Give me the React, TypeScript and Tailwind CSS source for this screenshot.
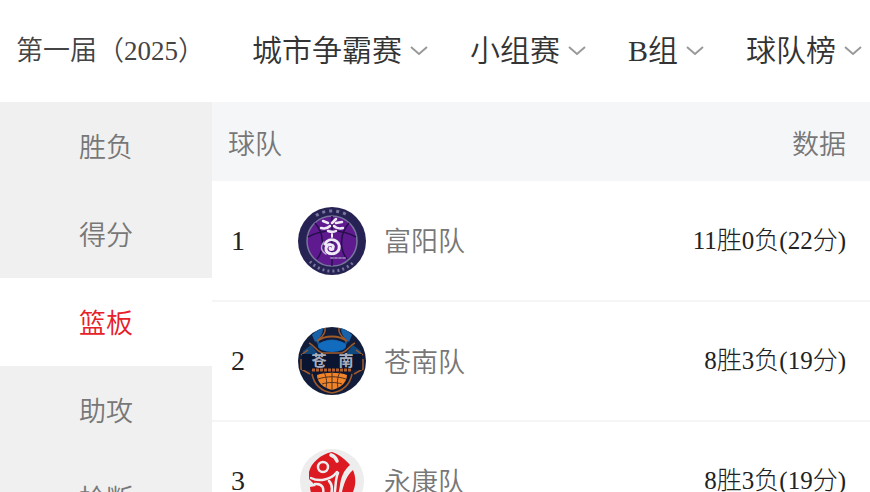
import { useState } from 'react';
import { clsx } from 'clsx';

const filters = [
	{ id: 'event', label: '赛事', options: ['城市争霸赛'] },
	{ id: 'stage', label: '阶段', options: ['小组赛'] },
	{ id: 'group', label: '组别', options: ['B组'] },
	{ id: 'board', label: '榜单', options: ['球队榜'] },
];

const categories = ['胜负', '得分', '篮板', '助攻', '抢断'];

const teams = [
	{ rank: 1, name: '富阳队', record: '11胜0负(22分)', Logo: FuyangLogo },
	{ rank: 2, name: '苍南队', record: '8胜3负(19分)', Logo: CangnanLogo },
	{ rank: 3, name: '永康队', record: '8胜3负(19分)', Logo: YongkangLogo },
];

function FuyangLogo() {
	return (
		<svg viewBox="0 0 68 68" className="w-[68px] h-[68px]" aria-hidden="true">
			<circle cx="34" cy="34" r="34" fill="#262253" />
			<circle cx="34" cy="34" r="25" fill="#5f1a90" stroke="#77769c" strokeWidth="1.5" />
			<g fill="none" stroke="#25104a" strokeWidth="1.5">
				<path d="M34 9v50" />
				<path d="M10 30c14-8 34-8 48 0" />
				<path d="M17 16c9 10 10 26 2 36" />
				<path d="M51 16c-9 10-10 26-2 36" />
			</g>
			<g fill="none" stroke="#77769c" strokeWidth="3">
				<path d="M18 8.500a30 30 0 0 1 32 0" strokeDasharray="3 4" />
				<path d="M12 54.500a30 30 0 0 0 44 0" strokeDasharray="2 3" />
			</g>
			<g fill="none" stroke="#efeaf6" strokeLinecap="round">
				<path d="M25 14l5 2M38 12l-4 4M44 15l-6 1M23 21c4 1 7 0 9-2M36 19c2 2 6 3 9 2" strokeWidth="2.500" />
				<path d="M30 24c3 1 6 1 8 0" strokeWidth="2.500" />
				<path d="M34 27v3" strokeWidth="2" />
				<path d="M27 37c4-8 16-4 14 5c-2 7-14 6-13-1c1-5 9-4 7 0c0 2-3 2-3 0" strokeWidth="3" />
				<path d="M26 35c-4 5-3 9 2 12" stroke="#b79fcd" strokeWidth="1.500" />
				<path d="M33 51h16" stroke="#8f70b0" strokeWidth="2" strokeDasharray="2 2" />
			</g>
		</svg>
	);
}

function CangnanLogo() {
	return (
		<svg viewBox="0 0 68 68" className="w-[68px] h-[68px]" aria-hidden="true">
			<circle cx="34" cy="34" r="34" fill="#111d3b" />
			<path d="M14 7l7 13l13 5l13-5l7-13c-4 2-7 6-8 10c-7-6-17-6-24 0c-1-4-4-8-8-10z" fill="#155591" />
			<path d="M14 8c4-4 7-6 11-7c0 6-3 10-8 14zM54 8c-4-4-7-6-11-7c0 6 3 10 8 14z" fill="#1762a8" />
			<ellipse cx="34" cy="19" rx="14" ry="6" fill="#126bbd" />
			<path d="M5 24l8-6l8 10l-15 6zM63 24l-8-6l-8 10l15 6z" fill="#10497f" />
			<g fill="none" stroke="#a05a28" strokeWidth="1.500">
				<path d="M27 1c1 5-2 8-6 11M41 1c-1 5 2 8 6 11" />
				<path d="M19 14c8-6 22-6 30 0" strokeWidth="2" />
				<path d="M11 16c5 2 7 8 13 10h20c6-2 8-8 13-10M3 28l7-5M65 28l-7-5" />
				<path d="M3 32v10l9 5M65 32v10l-9 5" />
			</g>
			<path d="M4 27h60v16H4z" fill="#0a1531" />
			<text x="21" y="39" textAnchor="middle" fill="#a9afbd" fontSize="15" fontWeight="700" fontFamily="Noto Sans CJK SC, sans-serif">苍</text>
			<text x="48" y="39" textAnchor="middle" fill="#a9afbd" fontSize="15" fontWeight="700" fontFamily="Noto Sans CJK SC, sans-serif">南</text>
			<path d="M15 42h38c1 12-6 22-19 25c-13-3-20-13-19-25z" fill="#0b1733" />
			<path d="M14 43h40" stroke="#b0602a" strokeWidth="3" strokeDasharray="3 1" />
			<path d="M19 48c7-3 23-3 30 0c0 7-6 13-15 15c-9-2-15-8-15-15z" fill="#f08428" />
			<g fill="none" stroke="#54301f" strokeWidth="1">
				<path d="M34 45v18M20 52c9-3 19-3 28 0M24 57c6-2 14-2 20 0" />
				<path d="M26 45c3 6 3 11 2 16M42 45c-3 6-3 11-2 16" />
			</g>
			<path d="M14 47c2 10 9 17 20 19c11-2 18-9 20-19" fill="none" stroke="#a05a28" strokeWidth="1.500" />
		</svg>
	);
}

function YongkangLogo() {
	return (
		<svg viewBox="0 0 68 68" className="w-[68px] h-[68px]" aria-hidden="true">
			<circle cx="34" cy="34" r="32" fill="#ededed" />
			<path d="M11 25c2-9 12-18 23-20c7 2 14 8 18 13c-7 6-9 13-10 20c-1 10-6 20-12 24c-10-4-18-14-18-22l6-1l-7-7z" fill="#dc1a22" />
			<path d="M55 23c4 9 3 20-4 28c-4 4-8 5-11 5c6-12 4-23 15-33z" fill="#dc1a22" />
			<g fill="none" stroke="#ededed" strokeLinecap="round">
				<circle cx="25" cy="20" r="5" strokeWidth="2.500" />
				<path d="M33 8c3 1 5 3 6 6" strokeWidth="3.500" />
				<path d="M13 31c8 4 20 2 26-6" strokeWidth="2.500" />
				<path d="M17 37c8-1 10 5 7 13M31 34c5 5 3 14-2 21M40 26c-4 9-1 19-6 29" strokeWidth="2.500" />
			</g>
		</svg>
	);
}

function FilterSelect({ id, label, options }: { id: string; label: string; options: string[] }) {
	return (
		<div className="flex items-center gap-2 shrink-0">
			<select
				id={id}
				aria-label={label}
				className="appearance-none field-sizing-content leading-[48px] bg-transparent text-[30px] font-[350] text-[#333] outline-none cursor-pointer"
			>
				{options.map((option) => (
					<option key={option}>{option}</option>
				))}
			</select>
			<svg viewBox="0 0 18 10" className="w-[18px] h-[10px] pointer-events-none" aria-hidden="true">
				<path d="M1 1l8 7l8-7" fill="none" stroke="#999" strokeWidth="2" />
			</svg>
		</div>
	);
}

export default function App() {
	const [active, setActive] = useState('篮板');

	return (
		<div className="flex flex-col h-screen overflow-hidden bg-white font-['Liberation_Serif','Noto_Sans_CJK_SC',serif]">
			<header className="flex items-center justify-between shrink-0 h-[102px] pl-4 pr-2">
				<h1 className="text-[27px] font-[350] text-[#444] whitespace-nowrap">第一届（2025）</h1>
				<div className="flex items-center gap-[42px]">
					{filters.map((filter) => (
						<FilterSelect key={filter.id} {...filter} />
					))}
				</div>
			</header>

			<div className="flex flex-1 min-h-0">
				<nav className="w-[212px] shrink-0 overflow-hidden bg-[#f0f0f0]">
					{categories.map((category) => (
						<button
							key={category}
							type="button"
							onClick={() => setActive(category)}
							className={clsx(
								'block w-full h-[88px] pt-1 text-[27px] font-[350]',
								category === active ? 'bg-white text-[#e62129]' : 'text-[#777]'
							)}
						>
							{category}
						</button>
					))}
				</nav>

				<main className="flex-1 overflow-hidden">
					<table className="w-full border-collapse">
						<thead>
							<tr className="h-[79px] bg-[#f5f6f8] text-[27px] text-[#777]">
								<th colSpan={2} className="pl-4 pt-2 text-left font-[350]">球队</th>
								<th className="pr-6 pt-2 text-right font-[350]">数据</th>
							</tr>
						</thead>
						<tbody>
							{teams.map(({ rank, name, record, Logo }) => (
								<tr key={rank} className="h-[120px] border-b-2 border-[#f5f5f5]">
									<td className="w-[86px] pl-[19px] text-[28px] text-[#222]">{rank}</td>
									<td>
										<div className="flex items-center gap-[18px] text-[27px] font-[350] text-[#777]">
											<Logo />
											<span className="pt-1">{name}</span>
										</div>
									</td>
									<td className="pr-6 text-right text-[25px] font-light text-[#222]">{record}</td>
								</tr>
							))}
						</tbody>
					</table>
				</main>
			</div>
		</div>
	);
}
